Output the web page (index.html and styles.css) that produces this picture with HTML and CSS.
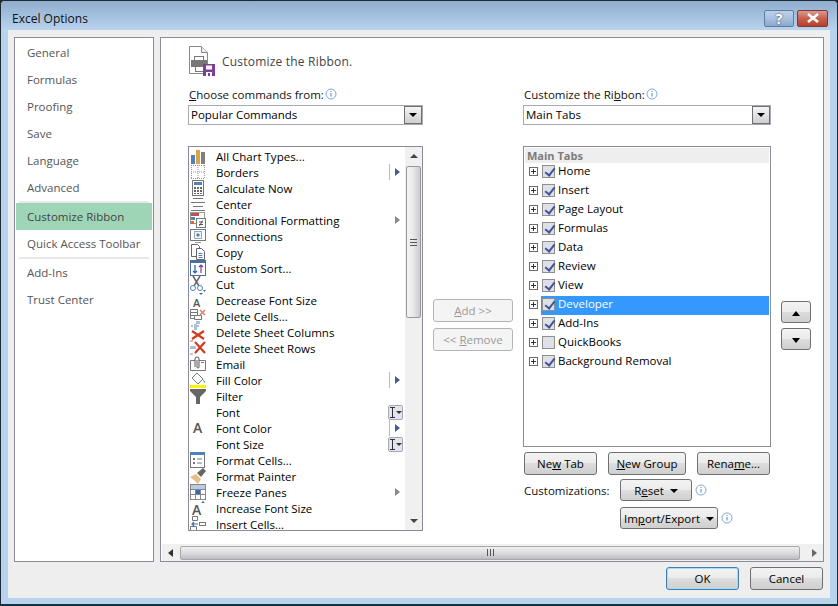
FILE: index.html
```html
<!DOCTYPE html>
<html lang="en">
<head>
<meta charset="utf-8">
<title>Excel Options</title>
<link rel="stylesheet" href="styles.css">
</head>
<body>
<div class="dialog">
  <div class="titlebar">
    <span class="title">Excel Options</span>
    <div class="caption">
      <span class="cap help">?</span>
      <span class="cap close">
        <svg width="16" height="10" viewBox="0 0 16 10"><path d="M3 1l10 8M13 1L3 9" stroke="#fff" stroke-width="2.6" fill="none"/></svg>
      </span>
    </div>
  </div>
  <div class="client">
    <div class="panes">
      <nav class="side">
        <div class="nav">General</div>
        <div class="nav">Formulas</div>
        <div class="nav">Proofing</div>
        <div class="nav">Save</div>
        <div class="nav">Language</div>
        <div class="nav">Advanced</div>
        <div class="nav-sep"></div>
        <div class="nav current">Customize Ribbon</div>
        <div class="nav">Quick Access Toolbar</div>
        <div class="nav-sep"></div>
        <div class="nav">Add-Ins</div>
        <div class="nav">Trust Center</div>
      </nav>
      <main class="main">
        <div class="content">
          <header class="head">
            <svg class="head-icon" width="28" height="31" viewBox="0 0 28 31">
              <path d="M1.5.5h12l6 6v21h-18z" fill="#fff" stroke="#8a8a8a"/>
              <path d="M13.5.5v6h6" fill="#eee" stroke="#8a8a8a"/>
              <rect x="6.5" y="10.500" width="9" height="4" fill="#fff" stroke="#777"/>
              <rect x="3" y="14" width="16" height="7" fill="#777"/>
              <rect x="7.500" y="20.500" width="8" height="5" fill="#fff" stroke="#777"/>
              <rect x="15" y="18" width="12" height="12" fill="#7b3f98"/>
              <rect x="18" y="19.500" width="6" height="4" fill="#fff"/>
              <rect x="18" y="26" width="6" height="4" fill="#fff"/>
              <rect x="20" y="27" width="2" height="3" fill="#7b3f98"/>
            </svg>
            <span class="head-text">Customize the Ribbon.</span>
          </header>
          <div class="cols">
            <section class="col col-left">
              <div class="label"><span><u>C</u>hoose commands from:</span>
                <svg class="info" width="12" height="12" viewBox="0 0 12 12"><circle cx="6" cy="6" r="5" fill="#fff" stroke="#7fa9d9"/><path d="M6 5v3.500M6 3v1" stroke="#4f81bd" fill="none"/></svg>
              </div>
              <div class="select"><span>Popular Commands</span><span class="drop"></span></div>
              <div class="cmdbox">
                <div class="cmds">
                  <div class="cmd"><svg class="ic" viewBox="0 0 16 16"><rect x="1" y="7" width="4" height="9" fill="#4f81bd"/><rect x="6" y="2" width="4" height="14" fill="#d9a441"/><rect x="11" y="4" width="4" height="12" fill="#7f7f7f"/></svg><span>All Chart Types...</span></div>
                  <div class="cmd"><svg class="ic" viewBox="0 0 16 16"><path d="M1.500 1v14M8 1v14M14.500 1v14M1 1.500h14M1 8h14M1 14.500h14" stroke="#999" stroke-dasharray="1 1" fill="none"/></svg><span>Borders</span><i class="bar"></i><i class="tri blue"></i></div>
                  <div class="cmd"><svg class="ic" viewBox="0 0 16 16"><rect x="2.500" y=".5" width="11" height="15" fill="#fff" stroke="#777"/><rect x="4" y="2" width="8" height="3" fill="#4f81bd"/><path d="M4 7h2v2H4zM7 7h2v2H7zM10 7h2v2h-2zM4 10h2v2H4zM7 10h2v2H7zM10 10h2v2h-2zM4 13h2v1H4zM7 13h2v1H7zM10 13h2v1h-2z" fill="#666"/></svg><span>Calculate Now</span></div>
                  <div class="cmd"><svg class="ic" viewBox="0 0 16 16"><path d="M3 2.500h10M1 6.500h14M3 10.500h10M1 14.500h14" stroke="#777" fill="none"/></svg><span>Center</span></div>
                  <div class="cmd"><svg class="ic" viewBox="0 0 16 16"><rect x=".5" y=".5" width="14" height="11" fill="#fff" stroke="#999"/><rect x="1" y="1" width="8" height="3" fill="#c0504d"/><rect x="1" y="5" width="4" height="3" fill="#4f81bd"/><rect x="1" y="9" width="3" height="3" fill="#e46c0a"/><rect x="6.500" y="6.500" width="9" height="9" fill="#fff" stroke="#777"/><path d="M9 10h4M9 12.500h4M12.500 8.500l-3 5.500" stroke="#555" fill="none"/></svg><span>Conditional Formatting</span><i class="tri gray"></i></div>
                  <div class="cmd"><svg class="ic" viewBox="0 0 16 16"><rect x=".5" y="1.500" width="15" height="11" fill="#fff" stroke="#777"/><rect x="4.500" y="3.500" width="7" height="7" fill="#eef3fa" stroke="#9ab"/><path d="M8 5l2 2-2 2-2-2z" fill="#4f81bd"/><path d="M5 14.500h6" stroke="#999" fill="none"/></svg><span>Connections</span></div>
                  <div class="cmd"><svg class="ic" viewBox="0 0 16 16"><path d="M1.500.5h6l2 2v10h-8z" fill="#fff" stroke="#666"/><path d="M6.500 4.500h5l3 3v8h-8z" fill="#fff" stroke="#666"/><path d="M8.500 9.500h4M8.500 11.500h4M8.500 13.500h4" stroke="#4f81bd" fill="none"/></svg><span>Copy</span></div>
                  <div class="cmd"><svg class="ic" viewBox="0 0 16 16"><rect x=".5" y=".5" width="15" height="15" fill="#fff" stroke="#4a6f9c"/><rect x="0" y="0" width="16" height="3" fill="#4a6f9c"/><path d="M5 5v8M3 11l2 2 2-2" stroke="#2a5ea8" stroke-width="1.200" fill="none"/><path d="M11 13V5M9 7l2-2 2 2" stroke="#7b3f98" stroke-width="1.200" fill="none"/></svg><span>Custom Sort...</span></div>
                  <div class="cmd"><svg class="ic" viewBox="0 0 16 16"><path d="M3 0l6 10M10 0L4 10" stroke="#666" stroke-width="1.500" fill="none"/><circle cx="3" cy="12" r="2.500" fill="#fff" stroke="#4f81bd"/><circle cx="10" cy="12" r="2.500" fill="#fff" stroke="#4f81bd"/><path d="M13 14h3l-1.500 2z" fill="#4a6f9c"/></svg><span>Cut</span></div>
                  <div class="cmd"><svg class="ic" viewBox="0 0 16 16"><text x="3" y="15" class="ic-a small">A</text><path d="M9 1h4l-2 2z" fill="#4a6f9c"/></svg><span>Decrease Font Size</span></div>
                  <div class="cmd"><svg class="ic" viewBox="0 0 16 16"><path d="M.5 1.500h7v3h-7zM.5 4.500h7v3h-7zM4.500 7.500h7v4h-7zM.5 7.500h4v3h-4z" fill="#fff" stroke="#777"/><path d="M10 2l5 5M15 2l-5 5" stroke="#d98068" stroke-width="1.500" fill="none"/><path d="M6 13h4v3H6z" fill="#a9c0de"/></svg><span>Delete Cells...</span></div>
                  <div class="cmd"><svg class="ic" viewBox="0 0 16 16"><path d="M1 2h2M7 2h2" stroke="#777" fill="none"/><rect x="4" y="0" width="3" height="6" fill="#a9c0de"/><path d="M2 7l12 8M14 7L2 15" stroke="#d23b1f" stroke-width="2.200" fill="none"/></svg><span>Delete Sheet Columns</span></div>
                  <div class="cmd"><svg class="ic" viewBox="0 0 16 16"><path d="M0 1h3M0 14h3" stroke="#888" fill="none"/><rect x="0" y="6" width="6" height="3" fill="#a9c0de"/><path d="M5 2l10 11M15 2L5 13" stroke="#d23b1f" stroke-width="2.200" fill="none"/></svg><span>Delete Sheet Rows</span></div>
                  <div class="cmd"><svg class="ic" viewBox="0 0 16 16"><path d="M.5 4.500h15v10H.5z" fill="#fff" stroke="#777"/><path d="M5 11V3a2 2 0 0 1 4 0v8a1 1 0 0 1-2 0V4" fill="#fff" stroke="#555"/><path d="M11 6.500h3" stroke="#777" fill="none"/></svg><span>Email</span></div>
                  <div class="cmd"><svg class="ic" viewBox="0 0 16 16"><path d="M2 6l5-5 6 6-5 5z" fill="#fff" stroke="#777"/><path d="M13 7l2 3-1 1z" fill="#2f6fb5"/><rect x="0" y="13" width="16" height="3" fill="#fff200"/></svg><span>Fill Color</span><i class="bar"></i><i class="tri blue"></i></div>
                  <div class="cmd"><svg class="ic" viewBox="0 0 16 16"><path d="M0 1h16v2l-6 6v7H6V9L0 3z" fill="#666"/></svg><span>Filter</span></div>
                  <div class="cmd"><span class="ic"></span><span>Font</span><b class="ibox"><svg class="beam" width="7" height="11" viewBox="0 0 7 11"><path d="M1 .5h5M3.500 .5v10M1 10.500h5" stroke="#333" fill="none"/></svg><i class="mini"></i></b></div>
                  <div class="cmd"><svg class="ic" viewBox="0 0 16 16"><text x="3" y="13" class="ic-a">A</text></svg><span>Font Color</span><i class="bar"></i><i class="tri blue"></i></div>
                  <div class="cmd"><span class="ic"></span><span>Font Size</span><b class="ibox"><svg class="beam" width="7" height="11" viewBox="0 0 7 11"><path d="M1 .5h5M3.500 .5v10M1 10.500h5" stroke="#333" fill="none"/></svg><i class="mini"></i></b></div>
                  <div class="cmd"><svg class="ic" viewBox="0 0 16 16"><rect x=".5" y=".5" width="14" height="15" fill="#fff" stroke="#777"/><rect x="0" y="0" width="15" height="3" fill="#4f81bd"/><path d="M3 6h2v2H3zM3 10h2v2H3z" fill="#777"/><path d="M7 7h5M7 11h5" stroke="#777" fill="none"/></svg><span>Format Cells...</span></div>
                  <div class="cmd"><svg class="ic" viewBox="0 0 16 16"><path d="M0 9l6-3 5 5-3 5-3-3z" fill="#e5be89"/><path d="M7 5l6-5 3 3-5 6z" fill="#666"/></svg><span>Format Painter</span></div>
                  <div class="cmd"><svg class="ic" viewBox="0 0 16 16"><rect x=".5" y=".5" width="15" height="15" fill="#fff" stroke="#888"/><path d="M.5 5.500h15M.5 10.500h15M5.500 .5v15M10.500 .5v15" stroke="#888" fill="none"/><rect x="1" y="1" width="14" height="4" fill="#b8cce4"/><rect x="6" y="6" width="4" height="4" fill="#2f6fb5"/></svg><span>Freeze Panes</span><i class="tri gray"></i></div>
                  <div class="cmd"><svg class="ic" viewBox="0 0 16 16"><text x="2" y="15" class="ic-a">A</text><path d="M11 3h4l-2-2z" fill="#4a6f9c"/></svg><span>Increase Font Size</span></div>
                  <div class="cmd"><svg class="ic" viewBox="0 0 16 16"><path d="M2.500 .5h5v4h-5zM.5 10.500h6v4h-6z" fill="#fff" stroke="#777"/><rect x="9.500" y="6.500" width="6" height="3" fill="#fff" stroke="#777"/><path d="M8 8H2M4 6L2 8l2 2" stroke="#2f6fb5" stroke-width="1.200" fill="none"/></svg><span>Insert Cells...</span></div>
                </div>
                <div class="vscroll">
                  <i class="sarrow up"></i>
                  <div class="vthumb"><i></i></div>
                  <i class="sarrow down"></i>
                </div>
              </div>
            </section>
            <section class="col col-mid">
              <button class="btn wide" disabled><u>A</u>dd &gt;&gt;</button>
              <button class="btn wide" disabled>&lt;&lt; <u>R</u>emove</button>
            </section>
            <section class="col col-right">
              <div class="label"><span>Customize the Ri<u>b</u>bon:</span>
                <svg class="info" width="12" height="12" viewBox="0 0 12 12"><circle cx="6" cy="6" r="5" fill="#fff" stroke="#7fa9d9"/><path d="M6 5v3.500M6 3v1" stroke="#4f81bd" fill="none"/></svg>
              </div>
              <div class="select"><span>Main Tabs</span><span class="drop"></span></div>
              <div class="tabs">
                <div class="tabs-head">Main Tabs</div>
                <div class="tab"><i class="plus"></i><div class="tab-item"><i class="check on"></i><span>Home</span></div></div>
                <div class="tab"><i class="plus"></i><div class="tab-item"><i class="check on"></i><span>Insert</span></div></div>
                <div class="tab"><i class="plus"></i><div class="tab-item"><i class="check on"></i><span>Page Layout</span></div></div>
                <div class="tab"><i class="plus"></i><div class="tab-item"><i class="check on"></i><span>Formulas</span></div></div>
                <div class="tab"><i class="plus"></i><div class="tab-item"><i class="check on"></i><span>Data</span></div></div>
                <div class="tab"><i class="plus"></i><div class="tab-item"><i class="check on"></i><span>Review</span></div></div>
                <div class="tab"><i class="plus"></i><div class="tab-item"><i class="check on"></i><span>View</span></div></div>
                <div class="tab"><i class="plus"></i><div class="tab-item selected"><i class="check on"></i><span>Developer</span></div></div>
                <div class="tab"><i class="plus"></i><div class="tab-item"><i class="check on"></i><span>Add-Ins</span></div></div>
                <div class="tab"><i class="plus"></i><div class="tab-item"><i class="check"></i><span>QuickBooks</span></div></div>
                <div class="tab"><i class="plus"></i><div class="tab-item"><i class="check on"></i><span>Background Removal</span></div></div>
              </div>
              <div class="tab-actions">
                <button class="btn newtab">Ne<u>w</u> Tab</button>
                <button class="btn newgroup"><u>N</u>ew Group</button>
                <button class="btn rename">Rena<u>m</u>e...</button>
              </div>
              <div class="custom">
                <span class="custom-label">Customizations:</span>
                <div class="custom-btns">
                  <div class="custom-row">
                    <button class="btn reset">R<u>e</u>set<i class="mini dark"></i></button>
                    <svg class="info" width="12" height="12" viewBox="0 0 12 12"><circle cx="6" cy="6" r="5" fill="#fff" stroke="#7fa9d9"/><path d="M6 5v3.500M6 3v1" stroke="#4f81bd" fill="none"/></svg>
                  </div>
                  <div class="custom-row">
                    <button class="btn import">Im<u>p</u>ort/Export<i class="mini dark"></i></button>
                    <svg class="info" width="12" height="12" viewBox="0 0 12 12"><circle cx="6" cy="6" r="5" fill="#fff" stroke="#7fa9d9"/><path d="M6 5v3.500M6 3v1" stroke="#4f81bd" fill="none"/></svg>
                  </div>
                </div>
              </div>
            </section>
            <section class="col col-move">
              <button class="btn move"><i class="mv up"></i></button>
              <button class="btn move"><i class="mv down"></i></button>
            </section>
          </div>
        </div>
        <div class="hscroll">
          <i class="harrow left"></i>
          <div class="hthumb"><i></i></div>
          <i class="harrow right"></i>
        </div>
      </main>
    </div>
    <footer class="foot">
      <button class="btn ok">OK</button>
      <button class="btn cancel">Cancel</button>
    </footer>
  </div>
</div>
</body>
</html>
```
FILE: styles.css
```css
* { box-sizing: border-box; }
html, body { margin: 0; padding: 0; width: 838px; height: 606px; overflow: hidden; background: #2b2b2b; }
body, button { font-family: "Open Sans", "Noto Sans", sans-serif; font-size: 11.5px; color: #000; }
i, em { font-style: normal; }
.dialog {
  width: 838px; height: 606px;
  display: flex; flex-direction: column;
  border: 1px solid #1c2b36; border-bottom: 2px solid #10333f;
  border-radius: 5px 5px 0 0;
  background: #b9d3ee;
  padding: 0 7px 6px 7px;
}
.titlebar {
  height: 29px; margin: 0 -7px; padding: 0 9px 0 11px;
  display: flex; align-items: center; justify-content: space-between;
  background: linear-gradient(#8fadcd, #a4c0de 50%, #b9d3ee);
  border-radius: 4px 4px 0 0;
}
.title { color: #111; font-size: 12px; margin-top: 5px; }
.caption { display: flex; gap: 3px; margin-top: 5px; }
.cap {
  height: 17px; display: flex; align-items: center; justify-content: center;
  border: 1px solid #5f7da3; border-radius: 2px; font-weight: 700; font-size: 14px; color: #fff;
}
.help { width: 30px; background: linear-gradient(#bdd0e8, #a9c1df 50%, #8aa7cc); text-shadow: 0 0 2px #334; }
.close { width: 31px; border-color: #7a3a35; background: linear-gradient(#d99a8e, #c7604f 50%, #b9402c); }
.client { flex: 1; background: #eee; padding: 7px 6px 0; display: flex; flex-direction: column; min-height: 0; }
.panes { display: flex; gap: 6px; height: 525px; }
.side {
  width: 140px; background: #fff; border: 1px solid #8b8b9b; padding-top: 1px;
  display: flex; flex-direction: column; flex: none;
}
.nav { height: 27px; line-height: 28px; padding-left: 11px; margin: 0 1px; color: #555; flex: none; }
.nav.current { background: #9fd5b7; color: #444; line-height: 27px; }
.nav-sep { height: 2px; background: #e8e8e8; margin: 0 4px; flex: none; }

.main { width: 664px; background: #fff; border: 1px solid #8b8b9b; display: flex; flex-direction: column; flex: none; }
.content { flex: 1; padding: 8px 0 0 27px; min-height: 0; }
.head { display: flex; align-items: center; gap: 6px; height: 31px; }
.head-text { color: #444; font-size: 12px; letter-spacing: .2px; }
.head-icon { flex: none; }
.cols { display: flex; gap: 10px; }
.col { display: flex; flex-direction: column; flex: none; }
.col-left { width: 235px; }
.col-mid { width: 80px; gap: 6px; padding-top: 222px; }
.col-right { width: 248px; }
.col-move { width: 30px; gap: 5px; padding-top: 224px; }
.label { height: 16px; margin-top: 9px; margin-bottom: 1px; padding-left: 1px; display: flex; align-items: center; gap: 1px; color: #111; }
.info { flex: none; }
.select {
  height: 20px; border: 1px solid #a9a9b5; display: flex; align-items: center; justify-content: space-between;
  padding-left: 2px; background: #fff; margin-top: 2px;
}
.select > span:first-child { margin-top: -1px; }
.drop {
  width: 18px; height: 18px; border: 1px solid #6f6f6f;
  background: linear-gradient(#f5f5f5, #e2e2e2 50%, #cfcfcf);
  display: flex; align-items: center; justify-content: center;
}
.drop::after { content: ""; border: 4px solid transparent; border-top: 4px solid #000; border-bottom: 0; }
.cmdbox {
  margin-top: 21px; height: 385px; border: 1px solid #8b8b9b; display: flex; background: #fff; overflow: hidden;
}
.cmds { flex: 1; min-width: 0; padding-top: 1px; }
.cmd { height: 16px; display: flex; align-items: center; color: #000; }
.cmd > span:not(.ic) { white-space: nowrap; }
.ic { width: 16px; height: 16px; flex: none; margin: 0 10px 0 1px; display: block; overflow: visible; }
.ic-a { font-family: "Open Sans", sans-serif; font-size: 14px; font-weight: 600; fill: #555; }
.ic-a.small { font-size: 11px; }
.bar { width: 1px; height: 16px; background: #b8b8c8; margin-left: auto; }
.tri { border: 4px solid transparent; border-left: 5px solid; border-right: 0; }
.tri.blue { margin: 0 5px 0 5px; border-left-color: #3f5d9a; }
.tri.gray { margin: 0 5px 0 auto; border-left-color: #888; }
.ibox {
  margin: 0 2px 0 auto; width: 15px; height: 15px; background: #e4e4f0; border: 1px solid #a7a7b8;
  border-radius: 2px; display: flex; align-items: center; gap: 0; padding-left: 0;
}
.beam { flex: none; }
.mini { border: 3px solid transparent; border-top: 3px solid #333; border-bottom: 0; flex: none; }
.vscroll { width: 17px; background: #f0f0f0; display: flex; flex-direction: column; align-items: center; flex: none; }
.sarrow { border: 4px solid transparent; flex: none; }
.sarrow.up { border-bottom: 4px solid #444; border-top: 0; margin-top: 7px; }
.sarrow.down { border-top: 4px solid #444; border-bottom: 0; margin-top: auto; margin-bottom: 7px; }
.vthumb {
  width: 15px; height: 152px; margin-top: 8px; border: 1px solid #999; border-radius: 2px;
  background: linear-gradient(90deg, #f4f4f4, #e8e8e8 50%, #c9c9d0);
  display: flex; align-items: center; justify-content: center;
}
.vthumb i { width: 7px; height: 7px; background: repeating-linear-gradient(#555 0 1px, transparent 1px 3px); }

.btn {
  display: block; padding: 0; height: 23px; border: 1px solid #707070; border-radius: 3px; color: #000;
  background: linear-gradient(#f3f3f3, #ebebeb 50%, #dddddd 50%, #cfcfcf);
  flex: none; text-align: center; white-space: nowrap;
}
.btn[disabled] { color: #9a9a9a; border-color: #b5b5b5; background: #f4f4f4; }
.wide { width: 80px; }
.move { width: 30px; height: 22px; }
.mv { display: inline-block; vertical-align: middle; border: 4px solid transparent; }
.mv.up { border-bottom: 5px solid #000; border-top: 0; }
.mv.down { border-top: 5px solid #000; border-bottom: 0; }

.tabs { margin-top: 21px; height: 301px; border: 1px solid #8b8b9b; padding: 1px 1px 0; background: #fff; }
.tabs-head { height: 15px; line-height: 15px; background: #eee; color: #7b7b7b; font-weight: 700; font-size: 11px; padding-left: 2px; }
.tab { height: 19px; display: flex; align-items: center; padding-left: 4px; }
.plus {
  width: 9px; height: 9px; border: 1px solid #6b6b6b; flex: none; margin: -2px 3px 0 0;
  background: linear-gradient(#333, #333) center / 5px 1px no-repeat, linear-gradient(#333, #333) center / 1px 5px no-repeat, #fff;
}
.tab-item { flex: 1; height: 19px; display: flex; align-items: center; gap: 3px; padding: 0 0 2px 1px; }
.tab-item span { line-height: 17px; margin-top: -2px; }
.tab-item.selected { background: #3399ff; color: #fff; }
.check {
  width: 13px; height: 13px; border: 1px solid #8e8f8f; background: #dfdfe8; flex: none; position: relative;
}
.check.on::after {
  content: ""; position: absolute; left: 4px; top: 0; width: 4px; height: 8px;
  border: solid #41539a; border-width: 0 2px 2px 0; transform: rotate(38deg);
}
.tab-actions { display: flex; margin-top: 5px; gap: 11px; height: 22px; padding-left: 1px; }
.tab-actions .btn { height: 23px; }
.newtab { width: 73px; }
.newgroup { width: 78px; }
.rename { width: 73px; }
.custom { display: flex; margin-top: 5px; padding-left: 1px; }
.custom-label { width: 96px; margin-top: 4px; color: #111; }
.custom-btns { display: flex; flex-direction: column; gap: 6px; }
.custom-row { display: flex; align-items: flex-start; gap: 2px; }
.custom-row .info { margin-left: 1px; margin-top: 5px; }
.custom-row .btn { height: 22px; }
.reset { width: 72px; }
.import { width: 98px; }
.mini.dark { display: inline-block; vertical-align: middle; border-width: 4px 4px 0; border-top-color: #000; margin-left: 6px; }

.hscroll { height: 17px; display: flex; align-items: center; margin: 0 0 0 1px; background: #f0f0f0; padding-right: 1px; }
.harrow { flex: none; border: 4px solid transparent; }
.harrow.left { border-right: 5px solid #333; border-left: 0; margin: 0 6px; }
.hthumb {
  width: 620px; height: 14px; border: 1px solid #a8a8a8; border-radius: 2px; margin-left: 1px;
  background: linear-gradient(#f0f0f0, #dcdcdc 50%, #bcbcc4);
  display: flex; align-items: center; justify-content: center;
}
.hthumb i { width: 7px; height: 7px; background: repeating-linear-gradient(90deg, #555 0 1px, transparent 1px 3px); }
.harrow.right { border-left: 5px solid #666; border-right: 0; margin-left: 12px; }
.foot { display: flex; justify-content: flex-end; gap: 11px; margin-top: 5px; padding-right: 1px; }
.ok { width: 73px; height: 23px; border-color: #3c7fb1; box-shadow: inset 0 0 0 1px #a8dcf5; }
.cancel { width: 73px; height: 23px; }
```
